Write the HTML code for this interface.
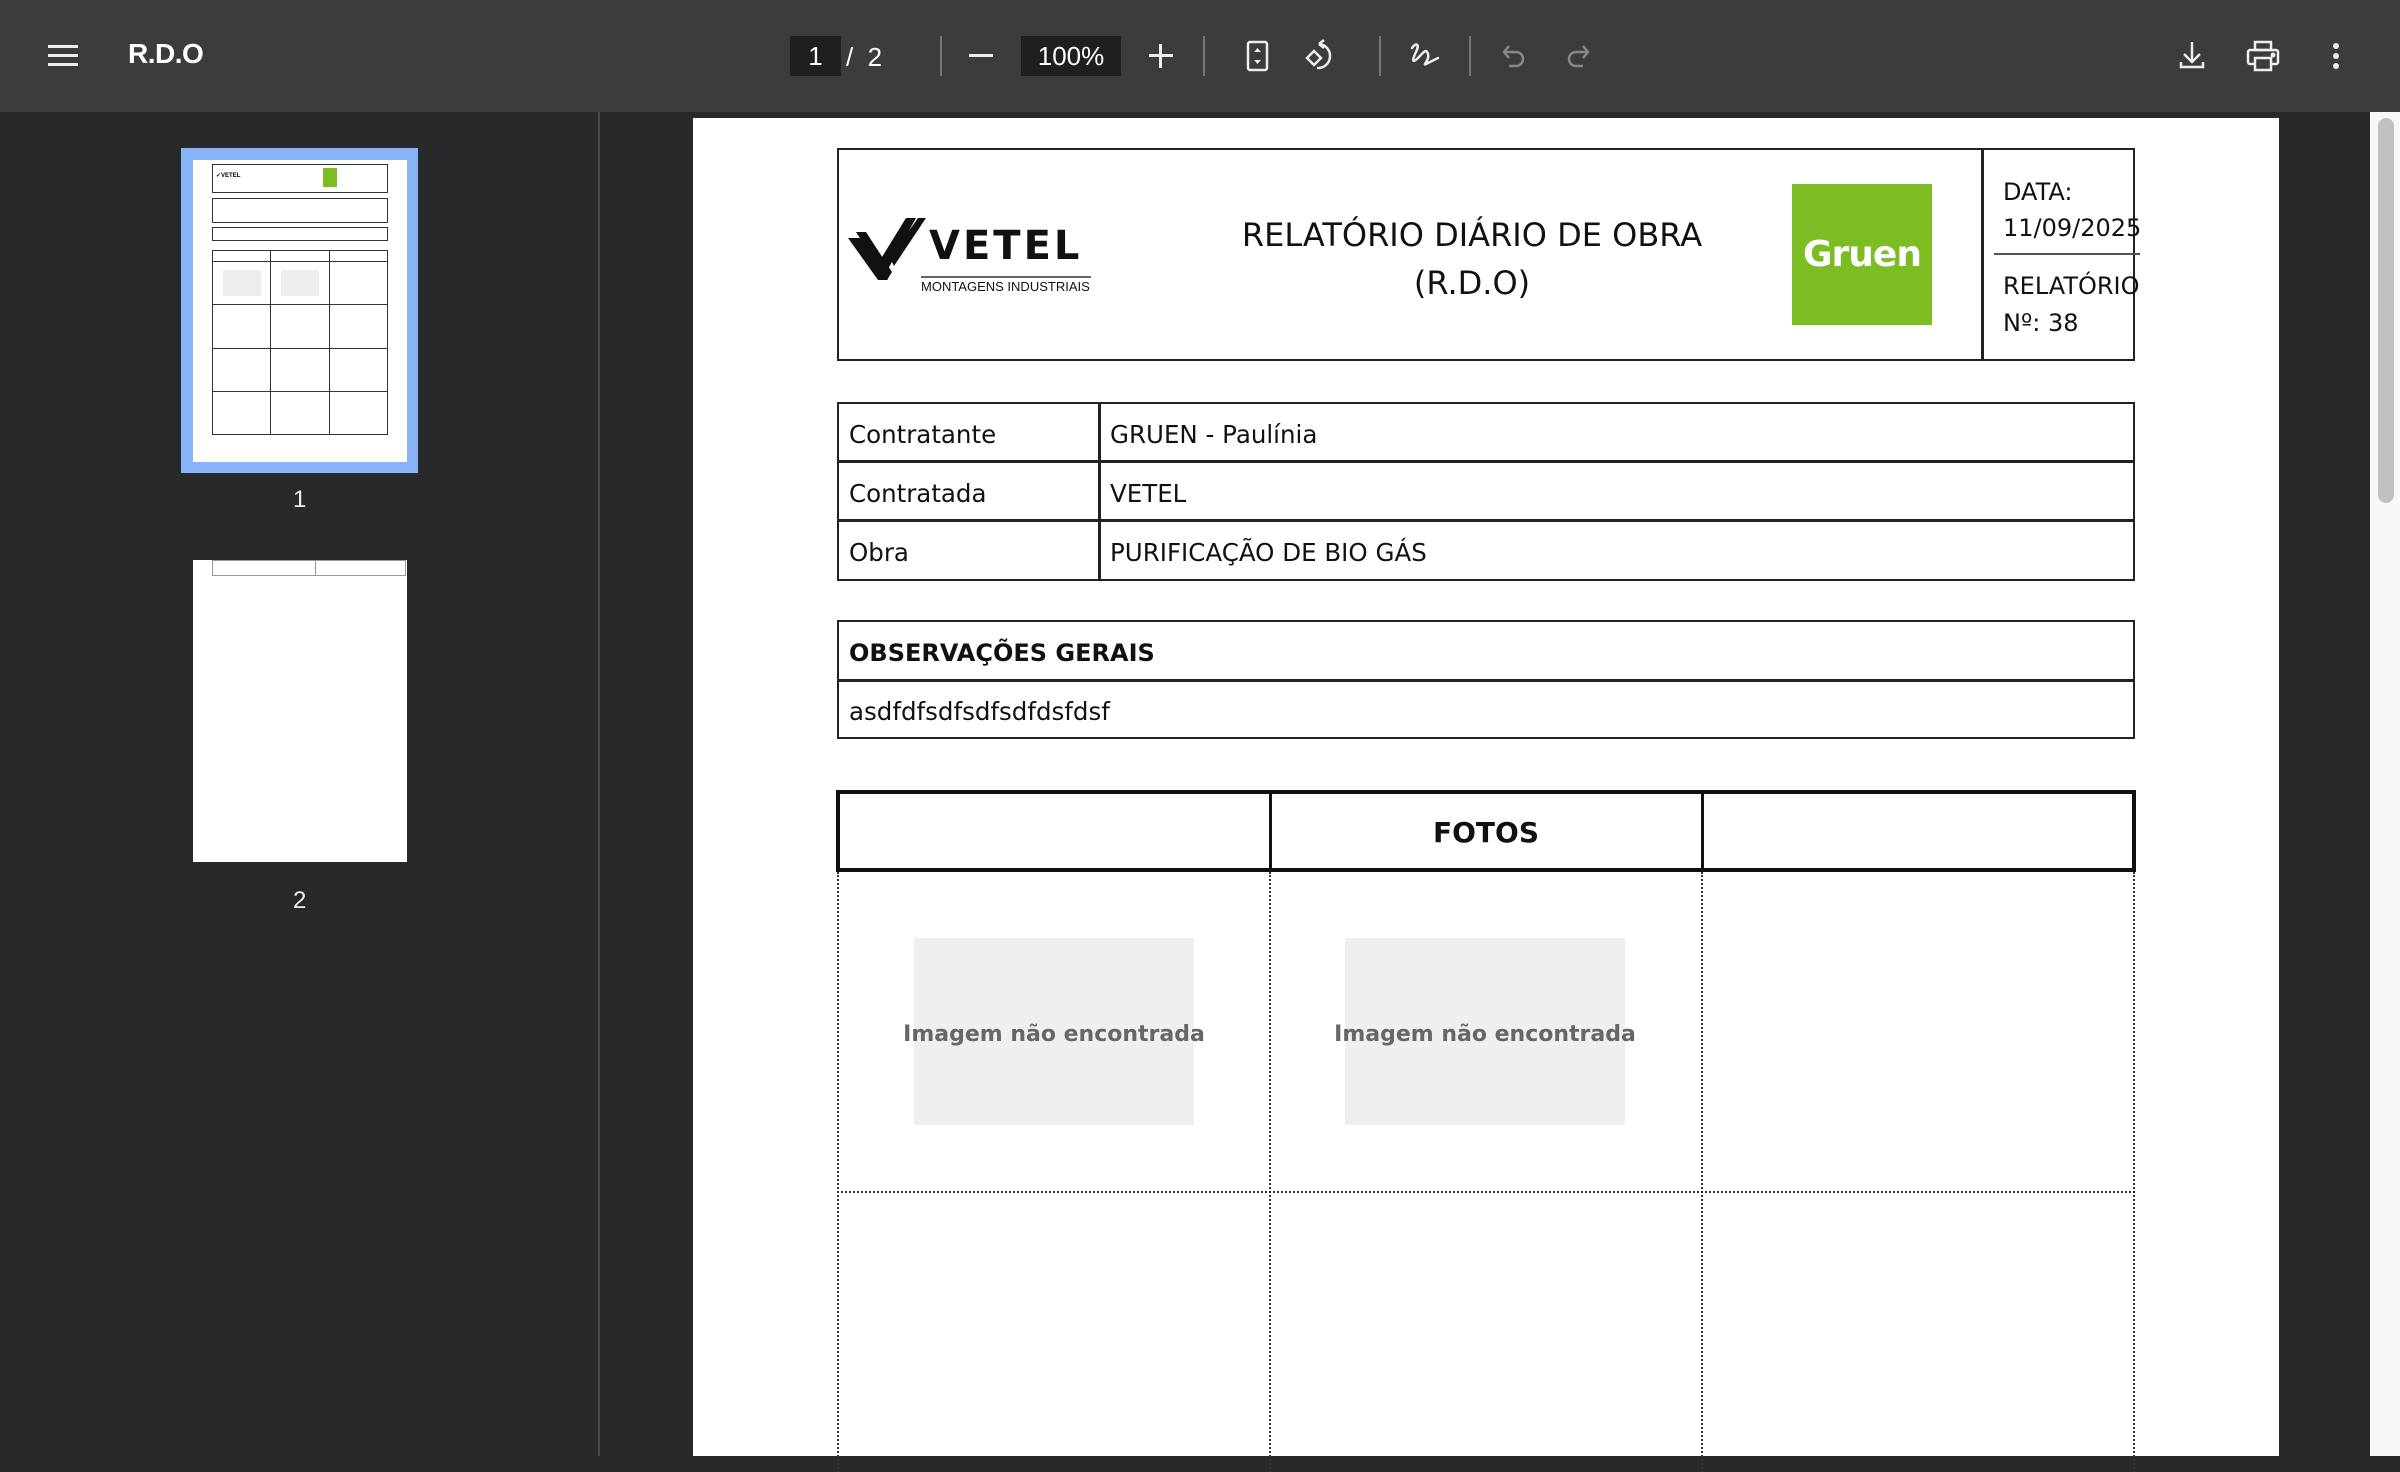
<!DOCTYPE html>
<html><head><meta charset="utf-8"><style>
*{margin:0;padding:0;box-sizing:border-box}
body{width:2400px;height:1456px;overflow:hidden;background:#28292b;position:relative;font-family:"Liberation Sans",Arial,sans-serif}
.a{position:absolute}
#tb{left:0;top:0;width:2400px;height:112px;background:#3c3c3c}
#side{left:0;top:112px;width:600px;height:1344px;background:#28292b;border-right:2px solid #4a4a4a}
#main{left:602px;top:112px;width:1768px;height:1344px;background:#282828}
#page{left:693px;top:118px;width:1586px;height:1338px;background:#fff}
.d{font-family:"DejaVu Sans",sans-serif;color:#111}
.sep{width:2px;height:40px;top:36px;background:#777}
.bx{border:2.5px solid #222}
.hl{height:2.5px;background:#222}
.vl{width:2.5px;background:#222}
.img{background:#efefef}
.ph{font-family:"DejaVu Sans",sans-serif;font-weight:bold;font-size:22px;color:#666;text-align:center;width:420px}
</style></head><body>
<div id="tb" class="a">
 <svg class="a" style="left:48px;top:44px" width="30" height="24"><rect x="0" y="1" width="30" height="3" fill="#eee"/><rect x="0" y="10" width="30" height="3" fill="#eee"/><rect x="0" y="19" width="30" height="3" fill="#eee"/></svg>
 <div class="a" style="left:128px;top:38px;color:#fff;font-size:28px;font-weight:bold;letter-spacing:-0.5px">R.D.O</div>
 <div class="a" style="left:790px;top:36px;width:51px;height:40px;background:#1f1f1f;color:#fff;font-size:26px;text-align:center;line-height:40px">1</div>
 <div class="a" style="left:846px;top:42px;color:#fff;font-size:26px">/ &nbsp;2</div>
 <div class="a sep" style="left:940px"></div>
 <div class="a" style="left:969px;top:54px;width:24px;height:3px;background:#eee"></div>
 <div class="a" style="left:1021px;top:36px;width:100px;height:40px;background:#1f1f1f;color:#fff;font-size:26px;text-align:center;line-height:40px">100%</div>
 <div class="a" style="left:1149px;top:54px;width:24px;height:3px;background:#eee"></div>
 <div class="a" style="left:1159px;top:44px;width:3px;height:24px;background:#eee"></div>
 <div class="a sep" style="left:1203px"></div>
 <svg class="a" style="left:1246px;top:40px" width="24" height="32" fill="none" stroke="#eee" stroke-width="2.5"><rect x="2" y="2" width="19" height="28" rx="2"/><path d="M8 12l3.5-4 3.5 4zM8 20l3.5 4 3.5-4z" fill="#eee" stroke="none"/></svg>
 <svg class="a" style="left:1304px;top:38px" width="36" height="36" fill="none" stroke="#eee" stroke-width="2.5"><path d="M3 20l7-7 7 7-7 7z"/><path d="M15 6a12 12 0 1 1-2 24"/><path d="M15 6l5-4M15 6l5 4"/></svg>
 <div class="a sep" style="left:1379px"></div>
 <svg class="a" style="left:1408px;top:40px" width="32" height="32" fill="none" stroke="#eee" stroke-width="2.5" stroke-linecap="round"><path d="M4 8c4-6 8-4 4 4s-4 12 2 6 8-10 10-4-6 12-2 10 8-4 12-6"/></svg>
 <div class="a sep" style="left:1469px"></div>
 <svg class="a" style="left:1500px;top:42px" width="28" height="28" fill="none" stroke="#888" stroke-width="2.5"><path d="M4 10h12a7 7 0 0 1 0 14h-7"/><path d="M9 4l-5 6 5 6"/></svg>
 <svg class="a" style="left:1564px;top:42px" width="28" height="28" fill="none" stroke="#888" stroke-width="2.5"><path d="M24 10h-12a7 7 0 0 0 0 14h7"/><path d="M19 4l5 6-5 6"/></svg>
 <svg class="a" style="left:2178px;top:40px" width="28" height="30" fill="none" stroke="#eee" stroke-width="2.5"><path d="M14 2v20M6 14l8 8 8-8M3 22v5h22v-5"/></svg>
 <svg class="a" style="left:2246px;top:40px" width="34" height="32" fill="none" stroke="#eee" stroke-width="2.5"><rect x="9" y="2" width="16" height="8"/><rect x="2" y="10" width="30" height="14" rx="2"/><rect x="9" y="18" width="16" height="12" fill="#3c3c3c"/><circle cx="27" cy="15" r="1.2" fill="#eee"/></svg>
 <svg class="a" style="left:2330px;top:42px" width="12" height="28" fill="#eee"><circle cx="6" cy="4" r="3"/><circle cx="6" cy="14" r="3"/><circle cx="6" cy="24" r="3"/></svg>
</div>

<div id="side" class="a">
 <div class="a" style="left:181px;top:36px;width:237px;height:325px;background:#8ab4f8"></div>
 <div class="a" style="left:193px;top:48px;width:214px;height:302px;background:#fff">
  <div class="a" style="left:19px;top:4px;width:176px;height:29px;border:1px solid #333"></div>
  <div class="a" style="left:23px;top:12px;width:20px;height:8px;font-size:6px;font-weight:bold">✓VETEL</div>
  <div class="a" style="left:130px;top:8px;width:14px;height:19px;background:#7bbd23"></div>
  <div class="a" style="left:19px;top:38px;width:176px;height:25px;border:1px solid #333"></div>
  <div class="a" style="left:19px;top:67px;width:176px;height:14px;border:1px solid #333"></div>
  <div class="a" style="left:19px;top:90px;width:176px;height:185px;border:1px solid #333"></div>
  <div class="a" style="left:19px;top:101px;width:176px;height:1px;background:#333"></div>
  <div class="a" style="left:77px;top:90px;width:1px;height:185px;background:#333"></div>
  <div class="a" style="left:136px;top:90px;width:1px;height:185px;background:#333"></div>
  <div class="a" style="left:19px;top:144px;width:176px;height:1px;background:#333"></div>
  <div class="a" style="left:19px;top:188px;width:176px;height:1px;background:#333"></div>
  <div class="a" style="left:19px;top:231px;width:176px;height:1px;background:#333"></div>
  <div class="a" style="left:30px;top:110px;width:38px;height:26px;background:#eee"></div>
  <div class="a" style="left:88px;top:110px;width:38px;height:26px;background:#eee"></div>
 </div>
 <div class="a" style="left:293px;top:374px;color:#eee;font-size:24px">1</div>
 <div class="a" style="left:193px;top:448px;width:214px;height:302px;background:#fff">
  <div class="a" style="left:19px;top:0;width:194px;height:16px;border:1px solid #999"></div>
  <div class="a" style="left:122px;top:0;width:1px;height:16px;background:#999"></div>
 </div>
 <div class="a" style="left:293px;top:775px;color:#eee;font-size:24px">2</div>
</div>

<div id="main" class="a"></div>
<div class="a" style="left:2370px;top:112px;width:30px;height:1344px;background:#f8f8f8"></div>
<div class="a" style="left:2378px;top:118px;width:16px;height:385px;background:#c1c1c1;border-radius:8px"></div>

<div id="page" class="a">
 <div class="a bx" style="left:144px;top:30px;width:1298px;height:213px"></div>
 <div class="a vl" style="left:1288px;top:30px;height:213px"></div>
 <svg class="a" style="left:155px;top:100px" width="80" height="70"><path d="M0 20h12l28 42h-10z M8 14h10l26 40-5 8z" fill="#111"/><path d="M26 52L58 0h10L34 62z M42 40L70 0h8L46 48z" fill="#111"/></svg>
 <div class="a" style="left:236px;top:108px;font-family:'DejaVu Sans',sans-serif;font-weight:bold;font-size:40px;letter-spacing:3px;color:#111;line-height:1">VETEL</div>
 <div class="a" style="left:228px;top:158px;width:170px;height:2px;background:#666"></div>
 <div class="a" style="left:228px;top:161px;font-family:'Liberation Sans',sans-serif;font-size:13px;color:#111">MONTAGENS INDUSTRIAIS</div>
 <div class="a d" style="left:479px;top:93px;width:600px;text-align:center;font-size:32px;line-height:48px">RELATÓRIO DIÁRIO DE OBRA<br>(R.D.O)</div>
 <div class="a" style="left:1099px;top:66px;width:140px;height:141px;background:#7bbd23;color:#fff;font-family:'DejaVu Sans',sans-serif;font-weight:bold;font-size:36px;text-align:center;line-height:141px;letter-spacing:-1px">Gruen</div>
 <div class="a d" style="left:1310px;top:56px;font-size:24px;line-height:36px;white-space:nowrap">DATA:<br>11/09/2025</div>
 <div class="a" style="left:1301px;top:135px;width:146px;height:2px;background:#555"></div>
 <div class="a d" style="left:1310px;top:150px;font-size:24px;line-height:37px;white-space:nowrap">RELATÓRIO<br>Nº: 38</div>

 <div class="a bx" style="left:144px;top:284px;width:1298px;height:179px"></div>
 <div class="a hl" style="left:144px;top:342px;width:1298px"></div>
 <div class="a hl" style="left:144px;top:401px;width:1298px"></div>
 <div class="a vl" style="left:405px;top:284px;height:179px"></div>
 <div class="a d" style="left:156px;top:300px;font-size:24.5px;line-height:34px">Contratante</div>
 <div class="a d" style="left:417px;top:300px;font-size:24.5px;line-height:34px">GRUEN - Paulínia</div>
 <div class="a d" style="left:156px;top:359px;font-size:24.5px;line-height:34px">Contratada</div>
 <div class="a d" style="left:417px;top:359px;font-size:24.5px;line-height:34px">VETEL</div>
 <div class="a d" style="left:156px;top:418px;font-size:24.5px;line-height:34px">Obra</div>
 <div class="a d" style="left:417px;top:418px;font-size:24.5px;line-height:34px">PURIFICAÇÃO DE BIO GÁS</div>

 <div class="a bx" style="left:144px;top:502px;width:1298px;height:119px"></div>
 <div class="a hl" style="left:144px;top:561px;width:1298px"></div>
 <div class="a d" style="left:156px;top:518px;font-size:24px;line-height:34px;font-weight:bold">OBSERVAÇÕES GERAIS</div>
 <div class="a d" style="left:156px;top:577px;font-size:24.5px;line-height:34px">asdfdfsdfsdfsdfdsfdsf</div>

 <div class="a" style="left:143px;top:672px;width:1300px;height:82px;border:4.5px solid #111"></div>
 <div class="a" style="left:576px;top:672px;width:2.5px;height:82px;background:#111"></div>
 <div class="a" style="left:1008px;top:672px;width:2.5px;height:82px;background:#111"></div>
 <div class="a d" style="left:578px;top:696px;width:430px;text-align:center;font-size:28px;font-weight:bold;line-height:38px">FOTOS</div>
 <div class="a" style="left:144px;top:754px;width:0;height:600px;border-left:2px dotted #333"></div>
 <div class="a" style="left:576px;top:754px;width:0;height:600px;border-left:2px dotted #333"></div>
 <div class="a" style="left:1008px;top:754px;width:0;height:600px;border-left:2px dotted #333"></div>
 <div class="a" style="left:1440px;top:754px;width:0;height:600px;border-left:2px dotted #333"></div>
 <div class="a" style="left:144px;top:1073px;width:1298px;height:0;border-top:2px dotted #333"></div>
 <div class="a img" style="left:221px;top:820px;width:280px;height:187px"></div>
 <div class="a img" style="left:652px;top:820px;width:280px;height:187px"></div>
 <div class="a ph" style="left:151px;top:904px">Imagem não encontrada</div>
 <div class="a ph" style="left:582px;top:904px">Imagem não encontrada</div>
</div>
</body></html>
